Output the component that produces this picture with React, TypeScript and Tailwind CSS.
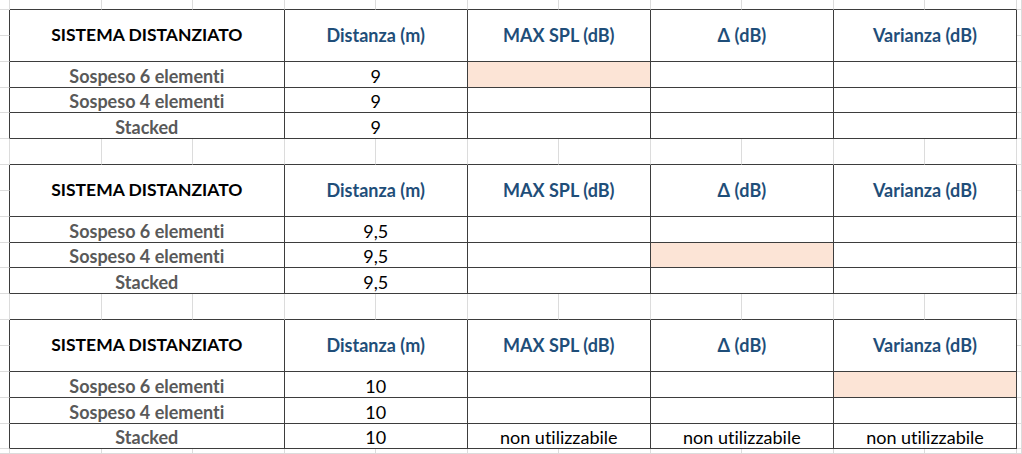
import React from "react";

type Block = {
  dist: string;
  fill: [number, number];
  lastRow?: boolean;
};

const blocks: Block[] = [
  { dist: "9", fill: [0, 2] },
  { dist: "9,5", fill: [1, 3] },
  { dist: "10", fill: [0, 4], lastRow: true },
];

const headers = ["Distanza (m)", "MAX SPL (dB)", "Δ (dB)", "Varianza (dB)"];
const labels = ["Sospeso 6 elementi", "Sospeso 4 elementi", "Stacked"];
const spans = ["col-span-3", "col-span-2", "col-span-2", "col-span-2", "col-span-2"];

function Blank({ darkRight, darkBottom }: { darkRight?: boolean; darkBottom?: boolean }) {
  return (
    <div
      className={
        "border-r border-b " +
        (darkRight ? "border-r-[#3d3d3d] " : "border-r-[#dcdcdc] ") +
        (darkBottom ? "border-b-[#3d3d3d]" : "border-b-[#dcdcdc]")
      }
    />
  );
}

function GapRow({ beforeTable }: { beforeTable: boolean }) {
  return (
    <>
      {Array.from({ length: 13 }).map((_, c) => (
        <Blank key={c} darkBottom={beforeTable && c > 0 && c < 12} />
      ))}
    </>
  );
}

function Table({ block }: { block: Block }) {
  return (
    <>
      <Blank darkRight />
      <div className="col-span-3 row-span-2 flex items-center justify-center border-r border-b border-[#3d3d3d] bg-white text-[17.5px] font-bold text-black">
        SISTEMA DISTANZIATO
      </div>
      {headers.map((h) => (
        <div
          key={h}
          className="col-span-2 row-span-2 flex items-center justify-center border-r border-b border-[#3d3d3d] bg-white text-[18px] font-bold text-[#1f4e79]"
        >
          {h}
        </div>
      ))}
      <Blank />
      <Blank darkRight />
      <Blank />
      {labels.map((label, r) => (
        <React.Fragment key={label}>
          <Blank darkRight />
          {[0, 1, 2, 3, 4].map((c) => {
            let text = "";
            if (c === 0) text = label;
            if (c === 1) text = block.dist;
            if (block.lastRow && r === 2 && c > 1) text = "non utilizzabile";
            const filled = block.fill[0] === r && block.fill[1] === c;
            return (
              <div
                key={c}
                className={
                  spans[c] +
                  " flex items-end justify-center leading-[22px] border-r border-b border-[#3d3d3d] text-[18px] " +
                  (filled ? "bg-[#fce4d6] " : "bg-white ") +
                  (c === 0 ? "font-bold text-[#595959]" : "text-black")
                }
              >
                {text}
              </div>
            );
          })}
          <Blank />
        </React.Fragment>
      ))}
    </>
  );
}

export default function App() {
  return (
    <div
      className="grid h-[454px] w-[1022px] overflow-hidden bg-white grid-cols-[10px_repeat(11,91.55px)_1fr] grid-rows-[10px_repeat(17,25.85px)_1fr] [font-variant-ligatures:none]"
      style={{ fontFamily: "Lato, 'Open Sans', sans-serif" }}
    >
      <GapRow beforeTable />
      <Table block={blocks[0]} />
      <GapRow beforeTable />
      <Table block={blocks[1]} />
      <GapRow beforeTable />
      <Table block={blocks[2]} />
      <GapRow beforeTable={false} />
    </div>
  );
}
